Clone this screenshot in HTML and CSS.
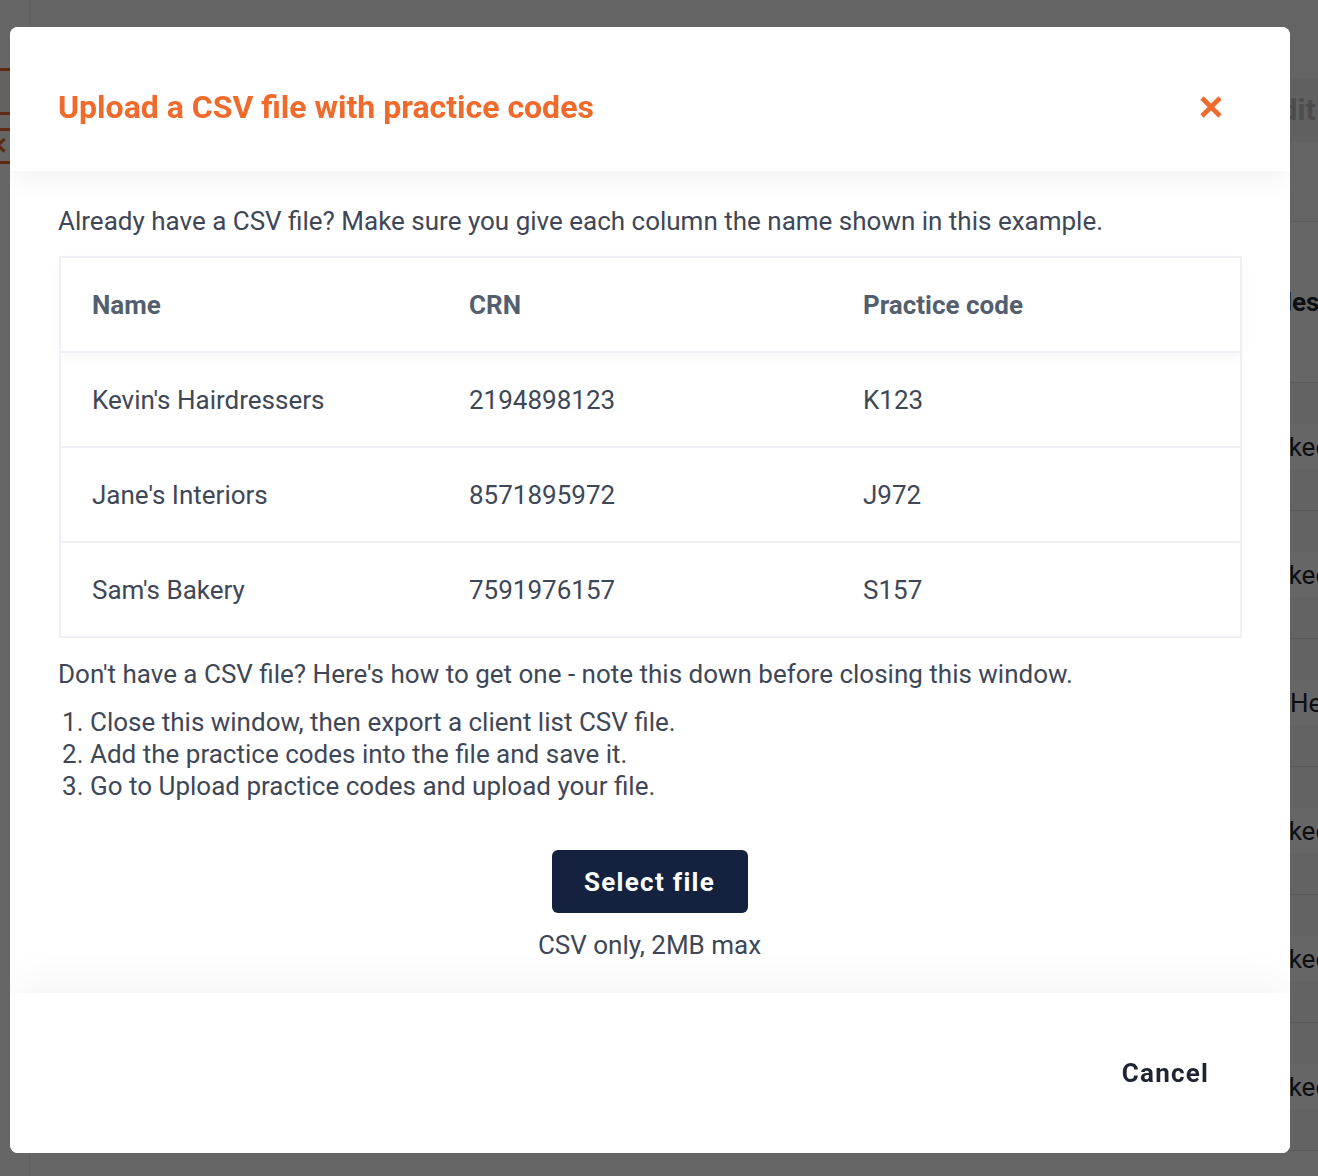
FILE: index.html
```html
<!DOCTYPE html>
<html lang="en">
<head>
<meta charset="utf-8">
<title>Upload a CSV file with practice codes</title>
<link rel="stylesheet" href="styles.css">
</head>
<body>
<div class="page">
  <aside class="side">
    <div class="chip-a"></div>
    <div class="chip-b"><span class="chip-x">✕</span></div>
  </aside>
  <main class="main">
    <div class="toolbar"><span class="spacer"></span><span class="edit">Edit</span></div>
    <div class="bg-head"><span class="spacer"></span><span class="bg-head-text">Practice codes</span></div>
    <div class="bg-row"><span class="spacer"></span><span class="badge">Linked</span></div>
    <div class="bg-row"><span class="spacer"></span><span class="badge">Linked</span></div>
    <div class="bg-row"><span class="spacer"></span><span class="badge badge-he">Help</span></div>
    <div class="bg-row"><span class="spacer"></span><span class="badge">Linked</span></div>
    <div class="bg-row"><span class="spacer"></span><span class="badge">Linked</span></div>
    <div class="bg-row"><span class="spacer"></span><span class="badge">Linked</span></div>
  </main>
</div>

<div class="overlay">
  <div class="modal" role="dialog" aria-labelledby="modal-title">
    <header class="modal-header">
      <h1 id="modal-title" class="modal-title">Upload a CSV file with practice codes</h1>
      <button class="close-btn" aria-label="Close">
        <svg width="24" height="24" viewBox="0 0 24 24" aria-hidden="true">
          <path d="M3 3 L21 21 M21 3 L3 21" stroke="#F06A2B" stroke-width="4.6" fill="none"/>
        </svg>
      </button>
    </header>
    <section class="modal-body">
      <p class="intro">Already have a CSV file? Make sure you give each column the name shown in this example.</p>
      <table class="example">
        <colgroup>
          <col class="c1"><col class="c2"><col class="c3">
        </colgroup>
        <thead>
          <tr><th>Name</th><th>CRN</th><th>Practice code</th></tr>
        </thead>
        <tbody>
          <tr><td>Kevin's Hairdressers</td><td>2194898123</td><td>K123</td></tr>
          <tr><td>Jane's Interiors</td><td>8571895972</td><td>J972</td></tr>
          <tr><td>Sam's Bakery</td><td>7591976157</td><td>S157</td></tr>
        </tbody>
      </table>
      <p class="how">Don't have a CSV file? Here's how to get one - note this down before closing this window.</p>
      <ol class="steps">
        <li>Close this window, then export a client list CSV file.</li>
        <li>Add the practice codes into the file and save it.</li>
        <li>Go to Upload practice codes and upload your file.</li>
      </ol>
      <div class="upload">
        <button class="select-btn">Select file</button>
        <div class="hint">CSV only, 2MB max</div>
      </div>
    </section>
    <footer class="modal-footer">
      <button class="cancel-btn">Cancel</button>
    </footer>
  </div>
</div>
</body>
</html>
```

FILE: styles.css
```css
* { box-sizing: border-box; }

html, body {
  margin: 0;
  padding: 0;
  width: 1318px;
  height: 1176px;
  overflow: hidden;
  font-family: Roboto, "Liberation Sans", Arial, sans-serif;
  background: #ffffff;
}

/* ---------- background page (mostly hidden) ---------- */
.page {
  display: flex;
  width: 1318px;
  height: 1176px;
  overflow: hidden;
  background: #ffffff;
}

.side {
  flex: 0 0 30px;
  display: flex;
  flex-direction: column;
  padding-top: 68px;
  border-right: 1px solid #eeeeee;
}

.chip-a {
  height: 47px;
  border-top: 3px solid #ee6a2c;
  border-bottom: 3px solid #ee6a2c;
  background: #f7f4f2;
}

.chip-b {
  margin-top: 13px;
  height: 36px;
  border-top: 3px solid #ee6a2c;
  border-bottom: 3px solid #ee6a2c;
  display: flex;
  align-items: center;
}

.chip-x {
  color: #ee6a2c;
  font-size: 24px;
  font-weight: 700;
  margin-left: -12px;
}

.main {
  flex: 1 1 auto;
  display: flex;
  flex-direction: column;
  min-width: 0;
}

.spacer { flex: 0 0 1256px; }

.toolbar {
  height: 222px;
  display: flex;
  align-items: flex-start;
  padding-top: 78px;
  border-bottom: 1px solid #e4e4e4;
  background: #fbfbfb;
}

.edit {
  display: inline-block;
  height: 64px;
  line-height: 64px;
  padding: 0 14px 0 0;
  margin-left: -22px;
  background: #f1f1f1;
  color: #bdbdbd;
  font-weight: 700;
  font-size: 30px;
  white-space: nowrap;
}

.bg-head {
  height: 161px;
  display: flex;
  align-items: center;
  border-bottom: 1px solid #e4e4e4;
}

.bg-head-text {
  margin-left: -140px;
  font-weight: 700;
  font-size: 26px;
  color: #1f2530;
  white-space: nowrap;
}

.bg-row {
  height: 128px;
  display: flex;
  align-items: center;
  border-bottom: 1px solid #e0e0e0;
  background: #f8f8f8;
}

.badge {
  display: inline-block;
  height: 46px;
  line-height: 46px;
  padding: 0 14px 0 4px;
  margin-left: -36px;
  background: #ffffff;
  color: #1f2530;
  font-size: 26px;
  white-space: nowrap;
}

.badge-he { margin-left: 0; }

/* ---------- overlay + modal ---------- */
.overlay {
  position: fixed;
  inset: 0;
  background: rgba(0, 0, 0, 0.6);
}

.modal {
  margin: 27px 0 0 10px;
  width: 1280px;
  height: 1126px;
  background: #ffffff;
  border-radius: 8px;
  display: flex;
  flex-direction: column;
  overflow: hidden;
}

.modal-header {
  flex: 0 0 144px;
  display: flex;
  align-items: center;
  justify-content: space-between;
  padding: 16px 67px 0 48px;
  background: #ffffff;
  position: relative;
  z-index: 2;
  box-shadow: 0 6px 28px rgba(0, 0, 0, 0.06);
}

.modal-title {
  margin: 0;
  font-size: 32px;
  line-height: 40px;
  font-weight: 700;
  color: #f06a2b;
  letter-spacing: 0;
}

.close-btn {
  border: 0;
  background: none;
  padding: 0;
  margin: 0;
  width: 24px;
  height: 24px;
  display: flex;
  cursor: pointer;
}

.modal-body {
  flex: 1 1 auto;
  padding: 34px 49px 32px 48px;
  background: #ffffff;
  color: #3e4757;
  font-size: 26px;
  line-height: 32px;
  position: relative;
  z-index: 1;
}

.intro { margin: 0 0 19px; }

.example {
  width: 1183px;
  margin-left: 1px;
  border-collapse: collapse;
  table-layout: fixed;
  border: 2px solid #eff0f5;
}

.example col.c1 { width: 378px; }
.example col.c2 { width: 394px; }
.example col.c3 { width: auto; }

.example th,
.example td {
  height: 95px;
  padding: 0 0 0 31px;
  text-align: left;
  vertical-align: middle;
  border-bottom: 2px solid #eff0f5;
}

.example th {
  font-weight: 700;
  color: #535f6f;
}

.example thead tr {
  box-shadow: 0 5px 14px rgba(0, 0, 0, 0.035);
}

.example td { color: #3e4757; }

.how { margin: 20px 0 16px; }

.steps {
  margin: 0;
  padding-left: 32px;
}

.upload {
  margin-top: 48px;
  display: flex;
  flex-direction: column;
  align-items: center;
}

.select-btn {
  width: 196px;
  height: 63px;
  border: 0;
  border-radius: 6px;
  background: #14223f;
  color: #ffffff;
  font-family: Roboto, "Liberation Sans", Arial, sans-serif;
  font-size: 26px;
  font-weight: 700;
  letter-spacing: 1.3px;
  cursor: pointer;
}

.hint {
  margin-top: 16px;
  color: #3e4757;
}

.modal-footer {
  flex: 0 0 160px;
  display: flex;
  align-items: center;
  justify-content: flex-end;
  padding-right: 81px;
  background: #ffffff;
  position: relative;
  z-index: 2;
  box-shadow: 0 -10px 40px rgba(0, 0, 0, 0.045);
}

.cancel-btn {
  border: 0;
  background: none;
  padding: 0;
  font-family: Roboto, "Liberation Sans", Arial, sans-serif;
  font-size: 26px;
  font-weight: 700;
  letter-spacing: 1.2px;
  color: #1f2530;
  cursor: pointer;
}
```
